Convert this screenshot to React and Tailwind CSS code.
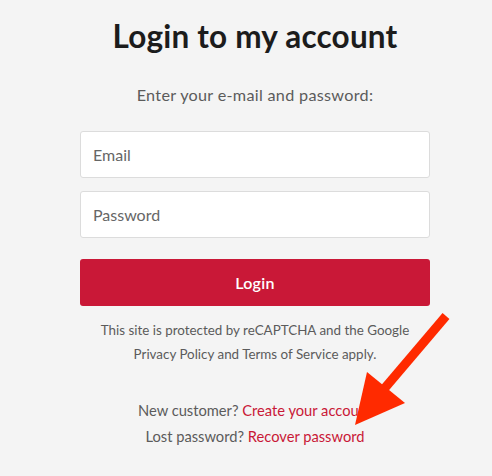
export default function App() {
  return (
    <div
      className="relative w-[492px] h-[476px] overflow-hidden bg-[#f4f4f4]"
      style={{ fontFamily: 'Lato, "Open Sans", sans-serif' }}
    >
      <div className="ml-[80px] w-[350px] flex flex-col items-center pt-[16px]">
        <h1 className="text-[31.5px] leading-[40px] font-bold text-[#1c1c1c] tracking-[0.2px]">
          Login to my account
        </h1>
        <p className="mt-[28px] text-[16.2px] leading-[22px] text-[#5b5b5b] tracking-[0.3px]">
          Enter your e-mail and password:
        </p>

        <div className="mt-[25px] w-full flex flex-col gap-[13px]">
          <input
            placeholder="Email"
            className="w-full h-[47px] px-[12px] bg-white border border-[#dcdcdc] rounded-[3px] text-[16px] placeholder:text-[#666] outline-none"
          />
          <input
            placeholder="Password"
            type="password"
            className="w-full h-[47px] px-[12px] bg-white border border-[#dcdcdc] rounded-[3px] text-[16px] placeholder:text-[#666] outline-none"
          />
        </div>

        <button className="mt-[21px] w-full h-[47px] rounded-[3px] bg-[#c91837] text-white text-[16px] font-semibold tracking-[0.3px]">
          Login
        </button>

        <div className="mt-[12px] text-center text-[13.4px] leading-[24px] text-[#5b5b5b]">
          <p>This site is protected by reCAPTCHA and the Google</p>
          <p>Privacy Policy and Terms of Service apply.</p>
        </div>

        <div className="mt-[31px] text-center text-[14.7px] leading-[26px] text-[#5b5b5b]">
          <p>
            New customer? <a className="text-[#c91837]">Create your account</a>
          </p>
          <p>
            Lost password? <a className="text-[#c91837]">Recover password</a>
          </p>
        </div>
      </div>

      {/* annotation arrow */}
      <svg className="absolute left-0 top-0" width="492" height="476" viewBox="0 0 492 476">
        <line x1="446" y1="316" x2="384" y2="389" stroke="#ff2a00" strokeWidth="9" />
        <polygon points="355,425 367,372 405,403" fill="#ff2a00" />
      </svg>
    </div>
  )
}
